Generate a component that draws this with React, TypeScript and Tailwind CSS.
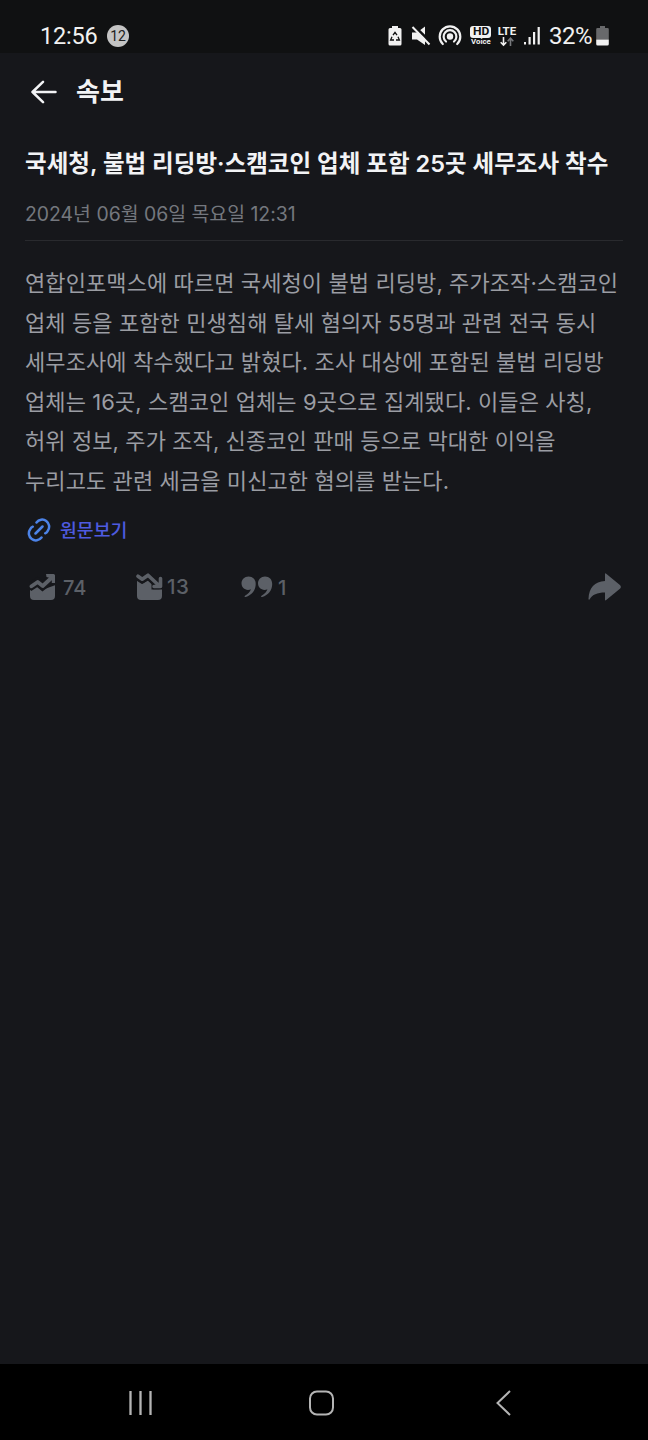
import React from "react";

const bodyLines = [
	"연합인포맥스에 따르면 국세청이 불법 리딩방, 주가조작·스캠코인",
	"업체 등을 포함한 민생침해 탈세 혐의자 55명과 관련 전국 동시",
	"세무조사에 착수했다고 밝혔다. 조사 대상에 포함된 불법 리딩방",
	"업체는 16곳, 스캠코인 업체는 9곳으로 집계됐다. 이들은 사칭,",
	"허위 정보, 주가 조작, 신종코인 판매 등으로 막대한 이익을",
	"누리고도 관련 세금을 미신고한 혐의를 받는다.",
];

function StatusBar() {
	return (
		<div className="flex h-[53px] shrink-0 items-center bg-[#101112] pl-10 pr-[39px] pt-[19px] font-[Roboto,sans-serif] text-[#f1f1f1]">
			<span className="w-[67px] text-[23.5px] leading-[34px] tracking-[-0.2px]">12:56</span>
			<span className="flex h-[22px] w-[22px] items-center justify-center rounded-full bg-[#c4c4c4] text-[14px] text-[#202020]">
				12
			</span>
			<svg className="ml-auto" width="14" height="22" viewBox="0 0 14 22">
				<path d="M4 1h6v2h2a1.5 1.5 0 0 1 1.5 1.5v14.500a1.500 1.500 0 0 1-1.500 1.500H2A1.500 1.500 0 0 1 .5 19V4.500A1.500 1.500 0 0 1 2 3h2z" fill="#f1f1f1" />
				<path d="M5 10.200 7 7.300l2 2.900M10 11.700l1.400 3.300H8M6 15H2.600L4 11.700" fill="none" stroke="#101112" strokeWidth="1.300" />
			</svg>
			<svg className="ml-[9px]" width="20" height="22" viewBox="0 0 20 22">
				<path d="M1 7.500h5L14 1.500v18.500L6 14.500H1z" fill="#f1f1f1" />
				<path d="M3 1 20 17.500" stroke="#101112" strokeWidth="2.800" />
				<path d="m1.500 2 17 17.500" stroke="#f1f1f1" strokeWidth="2" />
			</svg>
			<svg className="ml-[7px]" width="24" height="22" viewBox="0 0 24 22">
				<circle cx="12" cy="11.500" r="3.200" fill="#f1f1f1" />
				<g fill="none" stroke="#f1f1f1" strokeWidth="2.200" strokeLinecap="round">
					<path d="M8 16.500a6.400 6.400 0 1 1 8 0" />
					<path d="M4.800 19a10.300 10.300 0 1 1 14.400 0" />
				</g>
			</svg>
			<span className="ml-[9px] flex w-[20px] flex-col items-center font-bold">
				<span className="flex h-[12px] w-[21px] items-center justify-center rounded-[3px] bg-[#f1f1f1] text-[10.500px] leading-[12px] text-[#101112]">
					<span className="scale-x-115">HD</span>
				</span>
				<span className="text-[7.800px] leading-[8px]">Voice</span>
			</span>
			<span className="ml-[6px] flex w-[20px] flex-col items-center text-[11.500px] font-bold leading-[11px]">
				LTE
				<svg width="14" height="10" viewBox="0 0 14 10" fill="none" strokeWidth="1.600">
					<path d="M3.500 0v8M.7 5.200l2.800 3 2.800-3" stroke="#f1f1f1" />
					<path d="M10.500 9V1.200M7.700 4.200l2.800-3 2.800 3" stroke="#77797c" />
				</svg>
			</span>
			<svg className="ml-[6px]" width="18" height="20" viewBox="0 0 18 20" fill="#f1f1f1">
				<rect x="1" y="16" width="2" height="2.500" />
				<rect x="5.500" y="11" width="2.200" height="7.500" />
				<rect x="10" y="6" width="2.200" height="12.500" />
				<rect x="14.600" y="1" width="2.200" height="17.500" />
			</svg>
			<span className="ml-[8px] text-[24px] leading-[34px] tracking-[-0.500px]">32%</span>
			<svg className="ml-[4px]" width="13" height="22" viewBox="0 0 13 22">
				<path d="M4 1h5v2h2.500q1.300 0 1.300 1.300V14.500H.2V4.300Q.2 3 1.500 3H4z" fill="#68696b" />
				<path d="M.2 14.500h12.600V19q0 1.500-1.500 1.500H1.700Q.2 20.500.2 19z" fill="#f1f1f1" />
			</svg>
		</div>
	);
}

function Header() {
	return (
		<div className="flex h-[78px] items-center pl-[31px]">
			<svg width="26" height="24" viewBox="0 0 26 24" fill="none" stroke="#f2f3f5" strokeWidth="2.500" strokeLinecap="round" strokeLinejoin="round">
				<path d="M24.500 12H1.500M12 1.800 1.500 12 12 22.200" />
			</svg>
			<h1 className="ml-[19px] text-[26px] font-semibold leading-[38px] text-[#f2f3f5]">속보</h1>
		</div>
	);
}

function BullIcon() {
	return (
		<svg className="ml-[4px]" width="28" height="28" viewBox="0 0 28 28">
			<path d="M1 17.500 8.500 13.200l5 3.600 12.500-4.600V23a4 4 0 0 1-4 4H5a4 4 0 0 1-4-4z" fill="#5c6067" />
			<path d="m0 14.500 8.500-5.500 5 4L26 3.500" fill="none" stroke="#16171b" strokeWidth="8.500" />
			<path d="m2.500 13.300 6.200-4.300 5 4L24 3.500" fill="none" stroke="#5c6067" strokeWidth="3.800" strokeLinecap="round" strokeLinejoin="round" />
			<path d="M17 1h7.500Q26 1 26 2.500V10h-3.200V5.500L17.500 4z" fill="#5c6067" />
		</svg>
	);
}

function BearIcon() {
	return (
		<svg className="ml-[5px]" width="28" height="28" viewBox="0 0 28 28">
			<path d="M1 6.500 6 11l6-3.500 3.500 3.500v5.500H26V23a4 4 0 0 1-4 4H5a4 4 0 0 1-4-4z" fill="#5c6067" />
			<path d="m1 4 5 3.200 6-4L23 13h-6M24.500 5v8" fill="none" stroke="#16171b" strokeWidth="6.500" strokeLinejoin="round" />
			<path d="m2 3.200 4.200 3 5.800-4L23 12.500M24.500 5.500v8H18" fill="none" stroke="#5c6067" strokeWidth="3.600" strokeLinecap="round" strokeLinejoin="round" />
		</svg>
	);
}

function Actions() {
	return (
		<div className="mt-[25px] flex h-[36px] items-center text-[20px] font-medium text-[#5c6067]">
			<BullIcon />
			<span className="ml-[6px] w-[68px] pt-[2px]">74</span>
			<BearIcon />
			<span className="ml-[3px] w-[74px] pt-[2px] text-[20.500px] tracking-[0.500px]">13</span>
			<svg width="32" height="24" viewBox="0 0 32 24" fill="#5c6067">
				<path d="M7.500 1.500C3.500 1.500.5 4.500.5 8.300s2.800 6.600 6.500 6.600c1.100 0 2-.2 2.900-.7-.7 2.500-2.700 4.600-5.900 6.600-.9.600-.3 1.500.7 1.200 6-2 10-6.800 10-13.100C14.700 4.500 11.800 1.500 7.500 1.500z" />
				<path transform="translate(16.500)" d="M7.500 1.500C3.500 1.500.5 4.500.5 8.300s2.800 6.600 6.500 6.600c1.100 0 2-.2 2.900-.7-.7 2.500-2.700 4.600-5.900 6.600-.9.600-.3 1.500.7 1.200 6-2 10-6.800 10-13.100C14.700 4.500 11.800 1.500 7.500 1.500z" />
			</svg>
			<span className="ml-[5px] pt-[2px]">1</span>
			<svg className="ml-auto mr-[1px]" width="34" height="30" viewBox="0 0 34 30">
				<path d="M17 2.200q0-1.500 1.200-.5l14 11.600q1.500 1.700 0 3.300L18.200 28q-1.200 1-1.200-.5V20.500C9 20.500 4.500 22.500 1.500 27.500q-.9.700-1-.5C.9 16 6.500 9.500 17 9z" fill="#5c6067" />
			</svg>
		</div>
	);
}

function NavBar() {
	return (
		<div className="flex h-[76px] shrink-0 items-center bg-black pl-[127px] pr-[135px] pt-[1px]">
			<svg width="26" height="26" viewBox="0 0 26 26" stroke="#b4b4b4" strokeWidth="2.300">
				<path d="M3.500 1v24M13.500 1v24M23.500 1v24" />
			</svg>
			<svg className="ml-[155px]" width="26" height="26" viewBox="0 0 26 26" fill="none" stroke="#b4b4b4" strokeWidth="2">
				<rect x="2" y="1.500" width="23" height="23" rx="7" />
			</svg>
			<svg className="ml-auto" width="18" height="26" viewBox="0 0 18 26" fill="none" stroke="#b4b4b4" strokeWidth="2">
				<path d="M15 1 2.500 13 15 25" />
			</svg>
		</div>
	);
}

export default function App() {
	return (
		<div className="flex h-[1440px] w-[648px] flex-col overflow-hidden bg-[#16171b] font-[Inter,'Noto_Sans_CJK_KR',sans-serif]">
			<StatusBar />
			<Header />
			<main className="flex-1 px-[25px] pt-[15px]">
				<h2 className="whitespace-nowrap text-[23.500px] font-semibold leading-[36px] tracking-[0.020px] text-[#f2f3f5]">
					국세청, 불법 리딩방·스캠코인 업체 포함 25곳 세무조사 착수
				</h2>
				<p className="mt-[17px] whitespace-nowrap text-[19.400px] leading-[30px] text-[#74777e]">
					2024년 06월 06일 목요일 12:31
				</p>
				<div className="mt-[11px] h-px bg-[#292a2e]" />
				<div className="mt-[23px] text-[22px] leading-[39.600px] tracking-[0.090px] text-[#9b9da3]">
					{bodyLines.map((line) => (
						<p key={line} className="whitespace-nowrap">
							{line}
						</p>
					))}
				</div>
				<div className="mt-[14px] flex h-[28px] items-center">
					<svg className="ml-[2px]" width="24" height="24" viewBox="0 0 24 24" fill="none" stroke="#4c83e8" strokeWidth="2.500" strokeLinecap="round">
						<path d="m8.500 15.500 7-7M9.500 4.500a6.800 6.800 0 0 1 11.300 8.200q-.8 1.800-2.600 2.600M14.500 19.500a6.800 6.800 0 0 1-11.300-8.200q.8-1.800 2.600-2.600" />
					</svg>
					<span className="ml-[9px] pt-[3px] text-[18.300px] font-medium text-[#4e5be0]">원문보기</span>
				</div>
				<Actions />
			</main>
			<NavBar />
		</div>
	);
}
